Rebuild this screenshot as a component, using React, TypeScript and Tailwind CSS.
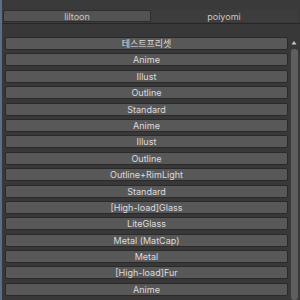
const presets = [
  "테스트프리셋",
  "Anime",
  "Illust",
  "Outline",
  "Standard",
  "Anime",
  "Illust",
  "Outline",
  "Outline+RimLight",
  "Standard",
  "[High-load]Glass",
  "LiteGlass",
  "Metal (MatCap)",
  "Metal",
  "[High-load]Fur",
  "Anime",
];

function PresetButton({ label }: { label: string }) {
  return (
    <button className="flex h-[13px] w-full shrink-0 items-center justify-center rounded-[2px] border border-[#2a2a2a] bg-[#585858] text-[9px] leading-none text-[#dcdcdc]">
      {label}
    </button>
  );
}

export default function App() {
  return (
    <div
      className="flex h-[300px] w-[300px] overflow-hidden bg-[#383838]"
      style={{ fontFamily: "Inter, 'Noto Sans CJK KR', sans-serif" }}
    >
      <div className="w-[2px] shrink-0 bg-[#5b6f88]" />
      <div className="flex flex-1 flex-col">
        <div className="flex h-[24px] shrink-0 items-end border-b border-[#262626] bg-[#3a3a3a] pl-[1px] pr-[3px]">
          <div className="mb-[1px] flex h-[12px] w-[148px] items-center justify-center rounded-t-[2px] border border-[#2e2e2e] bg-[#535353] text-[9px] leading-none text-[#c8c8c8]">
            liltoon
          </div>
          <div className="mb-[1px] flex h-[12px] flex-1 items-center justify-center bg-[#3d3d3d] text-[9px] leading-none text-[#c8c8c8]">
            poiyomi
          </div>
        </div>
        <div className="flex flex-1 pt-[13px]">
          <div className="flex flex-1 flex-col gap-[3.4px] pl-[3px] pr-[2px]">
            {presets.map((p, i) => (
              <PresetButton key={i} label={p} />
            ))}
          </div>
          <div className="mr-[2px] flex w-[8px] shrink-0 flex-col items-center">
            <svg width="6" height="6" viewBox="0 0 6 6" className="mt-[3px]">
              <path d="M3 1 L5.5 4.5 L0.5 4.5 Z" fill="#c8c8c8" />
            </svg>
            <div className="mt-[3px] w-[7px] flex-1 rounded-[3px] bg-[#5e5e5e]" />
          </div>
        </div>
      </div>
    </div>
  );
}
